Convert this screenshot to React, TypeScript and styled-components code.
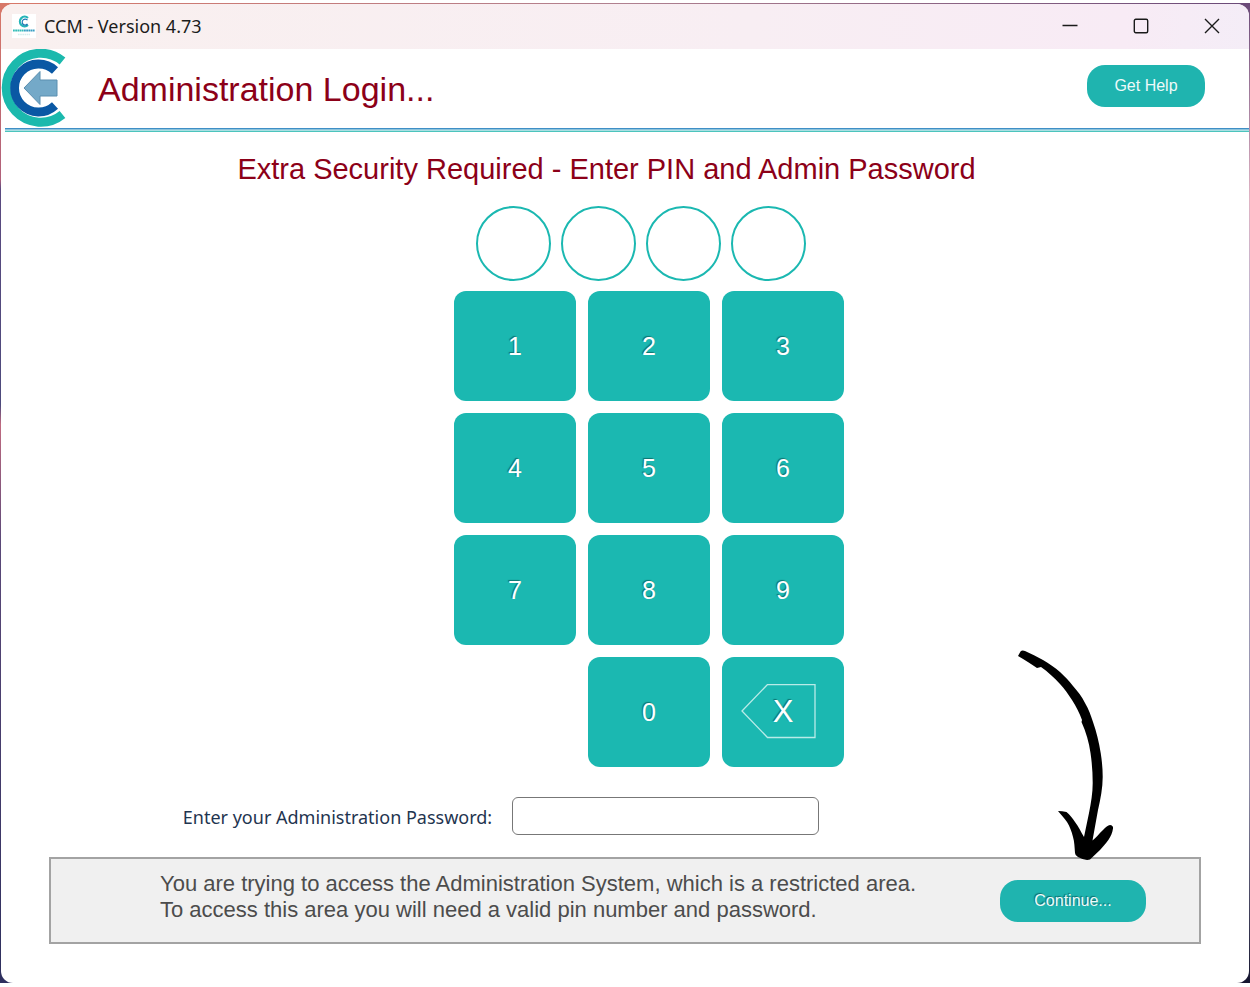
import React from "react";
import styled, { createGlobalStyle } from "styled-components";

const teal = "#1bb8b1";
const maroon = "#8c0018";
const arial = '"Liberation Sans", Arial, sans-serif';
const humanist = '"Noto Sans", "Segoe UI", sans-serif';

const GlobalStyle = createGlobalStyle`
  *, *::before, *::after { box-sizing: border-box; }
  body { margin: 0; background: #fff; font-family: ${arial}; }
  h1, h2, p { margin: 0; font-weight: 400; }
  button { border: 0; padding: 0; background: none; font-family: inherit; cursor: pointer; }
  svg { display: block; }
`;

const Desktop = styled.div`
  display: flex;
  flex-direction: column;
  min-height: 100vh;
  padding: 3px 0 4px;
`;

const Frame = styled.div`
  flex: 1;
  display: flex;
  padding: 1px 1px 0;
  background:
    linear-gradient(90deg, #d87868, #b08090 50%, #6a4a78) top / 100% 1px no-repeat,
    linear-gradient(#6a4a78, #e0b4c4 20%, #b9b4d0 32%, #8d8ba6 80%, #15152f) right / 50% 100% no-repeat,
    linear-gradient(#d87868, #b0607a 18%, #5a4a80 19%, #4d4a7c 41%, #c06a80 43%, #5a4878 55%, #2e2f5e) left / 50% 100% no-repeat;
`;

const Window = styled.div`
  flex: 1;
  display: flex;
  flex-direction: column;
  min-width: 0;
  overflow: hidden;
  border-radius: 12px;
  background: #fff;
`;

const TitleBar = styled.header`
  display: flex;
  align-items: center;
  height: 45px;
  flex: none;
  padding: 0 2px 2px 11px;
  background: linear-gradient(90deg, #f9f0ef, #f8eef3 60%, #f8ebf5 90%, #f4edf7);
`;

const AppName = styled.span`
  flex: 1;
  margin-left: 8px;
  font: 18px/24px ${humanist};
  color: #1c1c1c;
`;

const WindowButton = styled.button`
  display: grid;
  place-items: center;
  width: 71px;
  height: 43px;
`;

const Header = styled.div`
  display: flex;
  align-items: center;
  height: 79px;
  flex: none;
  padding-right: 44px;
`;

const BackButton = styled.button`
  width: 66px;
  height: 79px;
`;

const Title = styled.h1`
  flex: 1;
  margin-left: 31px;
  font-size: 34px;
  line-height: 40px;
  color: ${maroon};
`;

const HeaderActions = styled.div`
  display: flex;
  padding-bottom: 6px;
`;

const Action = styled.button<{ $width: number; $raised?: boolean }>`
  flex: none;
  width: ${(p) => p.$width}px;
  height: 42px;
  border-radius: 18px;
  background: #1fb4af;
  color: #eefafa;
  font-size: 16px;
  line-height: 20px;
  text-shadow: ${(p) => (p.$raised ? "-1px -1px 1px rgba(0, 60, 60, 0.6)" : "none")};
`;

const Rule = styled.div`
  flex: none;
  height: 4px;
  margin-left: 4px;
  background: linear-gradient(#3f8fc6 0 1px, #8cc3dc 1px 2px, #a9dfe2 2px 3px, #4cc4bd 3px 4px);
`;

const Main = styled.main`
  display: flex;
  flex-direction: column;
  align-items: center;
`;

const Prompt = styled.h2`
  padding: 20px 37px 0 0;
  font-size: 29px;
  line-height: 34px;
  color: ${maroon};
`;

const PinSlots = styled.div`
  display: flex;
  gap: 10px;
  padding: 20px 0 0 31px;
`;

const PinSlot = styled.span`
  width: 75px;
  height: 75px;
  border: 2px solid ${teal};
  border-radius: 50%;
`;

const Keypad = styled.div`
  display: grid;
  grid-template-columns: repeat(3, 122px);
  grid-auto-rows: 110px;
  gap: 12px;
  padding: 10px 0 0 48px;
`;

const Key = styled.button`
  display: grid;
  place-items: center;
  border-radius: 12px;
  background: ${teal};
  color: #fff;
  font-size: 25px;
  line-height: 28px;
  text-shadow: -1px -1px 1px rgba(0, 60, 60, 0.55);
`;

const ZeroKey = styled(Key)`
  grid-column: 2;
`;

const EraseFace = styled.span`
  display: grid;
  place-items: center;
  font-size: 31px;
  line-height: 54px;

  > * { grid-area: 1 / 1; }
`;

const PasswordRow = styled.div`
  display: flex;
  align-items: center;
  gap: 20px;
  padding: 30px 248px 0 0;
`;

const PasswordLabel = styled.label`
  padding-top: 2px;
  font: 18px/24px ${humanist};
  color: #1f3550;
`;

const PasswordInput = styled.input`
  width: 307px;
  height: 38px;
  padding: 0 10px;
  border: 1px solid #777;
  border-radius: 6px;
  background: #fff;
  font: 18px ${humanist};
`;

const Notice = styled.section`
  position: relative;
  display: flex;
  align-items: center;
  justify-content: space-between;
  height: 87px;
  margin: 22px 48px 0;
  padding: 0 53px 0 109px;
  border: 2px solid #a3a3a3;
  background: #f0f0f0;
`;

const NoticeText = styled.p`
  padding-bottom: 8px;
  font-size: 22px;
  line-height: 26px;
  color: #4c4c4c;
`;

const Pointer = styled.svg`
  position: absolute;
  right: 84px;
  bottom: 81px;
  pointer-events: none;
`;

const AppIcon = () => (
  <svg width="24" height="24" viewBox="0 0 24 24" aria-hidden="true">
    <rect width="24" height="24" fill="#fff" />
    <path d="M16 4A4.800 4.800 0 1 0 16 11" fill="none" stroke="#25b5b8" strokeWidth="2.200" />
    <path d="M15.500 6.200A3 3 0 1 0 15.500 10" fill="none" stroke="#1e78b4" strokeWidth="1.200" />
    <path d="M1 16.500H12" stroke="#35bdb8" strokeWidth="2.200" strokeDasharray="1.800 .4" />
    <path d="M12 16.500H23" stroke="#3a9fc4" strokeWidth="2.200" strokeDasharray="1.800 .4" />
    <path d="M6 20.500H18" stroke="#d4eeee" strokeWidth="1.600" strokeDasharray="1.600 .6" />
  </svg>
);

const Logo = () => (
  <svg width="66" height="79" viewBox="1 49 66 79" aria-hidden="true">
    <path d="M62.500 61A34.500 34.500 0 1 0 62.500 114.500" fill="none" stroke="#1bb9ad" strokeWidth="9" />
    <path d="M55 70.500A24 24 0 1 0 55 105.500" fill="none" stroke="#0a58a4" strokeWidth="8.800" />
    <path d="M24 88L40 71.500V80H57V96H40V104.500Z" fill="#74a9c8" stroke="#5b8fb0" />
  </svg>
);

const glyph = { width: 16, height: 16, viewBox: "0 0 16 16", fill: "none", stroke: "#1a1a1a", strokeWidth: 1.4 };

const digits = ["1", "2", "3", "4", "5", "6", "7", "8", "9"];

export default function App() {
  return (
    <>
      <GlobalStyle />
      <Desktop>
        <Frame>
          <Window>
            <TitleBar>
              <AppIcon />
              <AppName>CCM - Version 4.73</AppName>
              <WindowButton aria-label="Minimize">
                <svg {...glyph}><path d="M.5 7.500H15.500" /></svg>
              </WindowButton>
              <WindowButton aria-label="Maximize">
                <svg {...glyph}><rect x="1.300" y="1.300" width="13.400" height="13.400" rx="1.500" /></svg>
              </WindowButton>
              <WindowButton aria-label="Close">
                <svg {...glyph}><path d="M1 1L15 15M15 1L1 15" /></svg>
              </WindowButton>
            </TitleBar>
            <Header>
              <BackButton aria-label="Back"><Logo /></BackButton>
              <Title>Administration Login...</Title>
              <HeaderActions>
                <Action $width={118}>Get Help</Action>
              </HeaderActions>
            </Header>
            <Rule />
            <Main>
              <Prompt>Extra Security Required - Enter PIN and Admin Password</Prompt>
              <PinSlots>
                <PinSlot />
                <PinSlot />
                <PinSlot />
                <PinSlot />
              </PinSlots>
              <Keypad>
                {digits.map((d) => (
                  <Key key={d}>{d}</Key>
                ))}
                <ZeroKey>0</ZeroKey>
                <Key aria-label="Erase">
                  <EraseFace>
                    <svg width="84" height="56" viewBox="1 1 84 56" fill="none" stroke="#b9ebe8" strokeWidth="1.300">
                      <path d="M2 28L27.500 1.500H75V54.500H27.500Z" />
                    </svg>
                    <span>X</span>
                  </EraseFace>
                </Key>
              </Keypad>
              <PasswordRow>
                <PasswordLabel htmlFor="admin-password">Enter your Administration Password:</PasswordLabel>
                <PasswordInput id="admin-password" type="password" />
              </PasswordRow>
            </Main>
            <Notice>
              <NoticeText>
                You are trying to access the Administration System, which is a restricted area.
                <br />
                To access this area you will need a valid pin number and password.
              </NoticeText>
              <Action $width={146} $raised>Continue...</Action>
              <Pointer width="100" height="212" viewBox="1015 649 100 212" aria-hidden="true">
                <path d="M1018 656L1020.500 651.500Q1022 650 1025 651C1031 653.500 1037 656.500 1043 660C1049 663.500 1055 667.500 1060 672C1065 676.500 1069 681 1073 686C1078 691.500 1082 697 1085 703C1088.500 709 1091 715.500 1093 722C1096.500 732 1099 742 1100.700 753C1102 761 1102.700 769 1102.700 777C1102.700 788 1100.500 799 1098 810L1092.500 840.500C1096 838 1099 833.500 1103 830Q1107 825.500 1110 825Q1113.500 825.500 1113 828.500C1112 837 1106 843.500 1100 850L1090 859.500Q1085 861 1078 857Q1075 855.500 1075 853C1074.500 847 1074.500 842 1073 837C1071.500 831 1070 827 1067 822C1064.500 818 1061 815 1058 811Q1062 811 1066.500 812C1070 815 1072.500 818 1075 822C1078.500 826.500 1081 832 1084 837L1089 813C1091 803 1092.700 793 1092.700 783C1092.700 773 1092 763 1090.500 753C1089 742 1086 732 1081.500 722L1082 720C1079.500 713 1076 706 1072 700C1068.500 694.500 1064.500 689 1060 684C1054 677.500 1048 672 1041 667L1037 668C1031 664 1025 660 1018 656Z" />
              </Pointer>
            </Notice>
          </Window>
        </Frame>
      </Desktop>
    </>
  );
}
